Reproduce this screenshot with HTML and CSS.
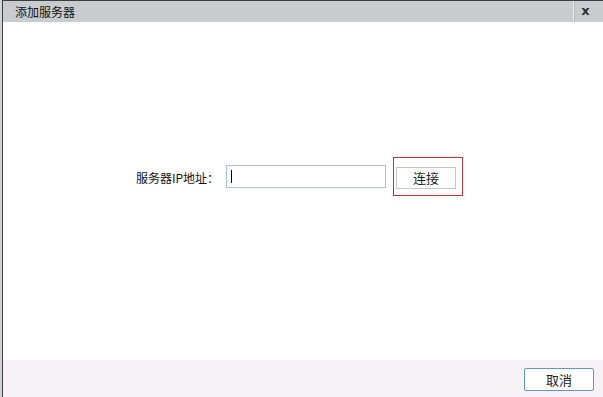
FILE: index.html
```html
<!DOCTYPE html>
<html lang="zh-CN">
<head>
  <meta charset="UTF-8">
  <title>添加服务器</title>
  <link rel="stylesheet" href="styles.css">
</head>
<body>
  <div class="dialog">
    <div class="titlebar">
      <span class="title">添加服务器</span>
      <span class="close">x</span>
    </div>

    <div class="dialog-body">
      <div class="form-row">
        <label class="field-label">服务器IP地址：</label>
        <div class="field-input"><span class="caret"></span></div>
        <div class="highlight">
          <button class="btn btn-connect">连接</button>
        </div>
      </div>
    </div>

    <div class="footer">
      <button class="btn btn-cancel">取消</button>
    </div>
  </div>
</body>
</html>
```

FILE: styles.css
```css
:root {
  --frame-dark: #3b3e42;
  --title-bg: #c9ccce;
  --footer-bg: #f6f2f6;
  --text-color: #1a1a1a;
  --input-border: #a7c3e2;
  --cancel-border: #5f96d6;
}

* {
  margin: 0;
  padding: 0;
  box-sizing: border-box;
  font-family: "Noto Sans CJK SC", "Liberation Sans", sans-serif;
}

html, body {
  height: 100%;
}

body {
  background-color: #d2d2d2;
  color: var(--text-color);
  padding-left: 2px;
}

.dialog {
  height: 100%;
  display: flex;
  flex-direction: column;
  border-left: 1px solid var(--frame-dark);
  border-top: 1px solid var(--frame-dark);
  background-color: #ffffff;
}

.titlebar {
  height: 21px;
  display: flex;
  align-items: stretch;
  background-color: var(--title-bg);
}

.title {
  flex: 1;
  padding-left: 12px;
  font-size: 12px;
  line-height: 21px;
  color: #111;
}

.close {
  width: 24px;
  margin-right: 6px;
  border-left: 1px solid #e9ebed;
  box-shadow: inset 1px 0 0 #b9bcbf;
  text-align: center;
  font-family: "DejaVu Sans", sans-serif;
  font-weight: bold;
  font-size: 13px;
  line-height: 19px;
  color: #2e3236;
}

.dialog-body {
  flex: 1;
  display: flex;
  justify-content: center;
  align-items: flex-start;
  padding-top: 135px;
  padding-right: 7px;
}

.form-row {
  display: flex;
  align-items: center;
}

.field-label {
  width: 90px;
  font-size: 12px;
  color: #111;
  padding-top: 2px;
}

.field-input {
  width: 160px;
  height: 23px;
  border: 1px solid var(--input-border);
  background-color: #fff;
  display: flex;
  align-items: center;
  padding-left: 4px;
}

.caret {
  width: 1px;
  height: 13px;
  background-color: #000;
}

.highlight {
  margin-left: 7px;
  width: 70px;
  height: 39px;
  border: 1px solid #c8323a;
  padding: 9px 0 0 2px;
  display: flex;
  align-items: flex-start;
}

.btn {
  background-color: #fff;
  font-size: 13px;
  color: #222;
  cursor: pointer;
}

.btn-connect {
  width: 60px;
  height: 22px;
  border: 1px solid #c3c7cb;
  line-height: 20px;
}

.footer {
  height: 37px;
  display: flex;
  justify-content: flex-end;
  align-items: flex-start;
  padding-top: 8px;
  padding-right: 9px;
  background-color: var(--footer-bg);
}

.btn-cancel {
  width: 70px;
  height: 23px;
  border: 1px solid var(--cancel-border);
  border-radius: 2px;
  line-height: 21px;
}
```
